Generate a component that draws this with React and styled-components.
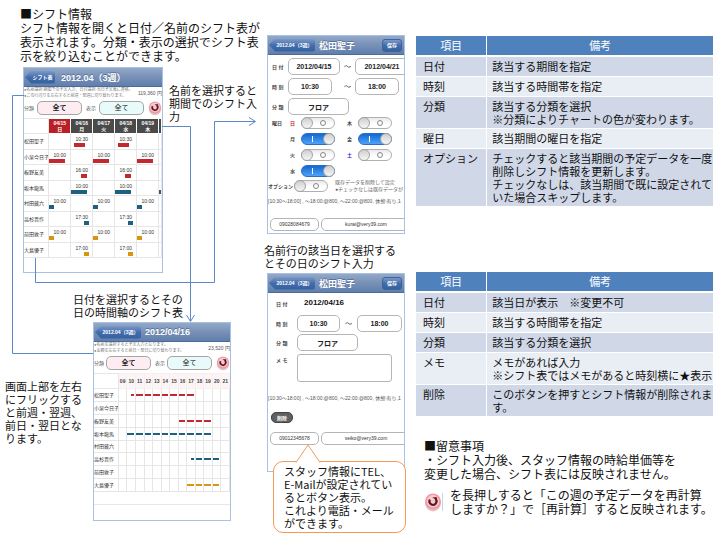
import React from "react";
import styled, { createGlobalStyle, css } from "styled-components";

const GlobalStyle = createGlobalStyle`
  *, *::before, *::after { box-sizing: border-box; }
  body {
    margin: 0;
    background: #fff;
    color: #111;
    font-family: "Liberation Sans", "Noto Sans CJK JP", sans-serif;
  }
  p, h2 { margin: 0; font-weight: 400; }
  button, input, textarea { font-family: inherit; margin: 0; padding: 0; }
`;

/* ---------- page ---------- */

const Page = styled.main`
  position: relative;
  display: grid;
  grid-template-columns: 264fr 152fr 297fr;
  align-items: start;
  padding-right: 11px;
  min-height: 535px;
  overflow: hidden;
`;

const Column = styled.section`
  display: flex;
  flex-direction: column;
  min-width: 0;
  padding-top: ${(p) => p.$top}px;
`;

const Lead = styled.div`
  font-size: 12px;
  line-height: 14px;
  white-space: nowrap;
  font-family: "Noto Sans CJK JP", sans-serif;
  h2 { font-size: inherit; }
`;

const Intro = styled(Lead)`
  padding-left: 20px;
`;

const Caption = styled.p`
  font-family: "Noto Sans CJK JP", sans-serif;
  font-size: 11px;
  line-height: 13px;
  white-space: nowrap;
`;

const WeekSection = styled.div`
  display: flex;
  gap: 6px;
  margin-top: 4px;
  padding-left: 23px;
  ${Caption} { padding-top: 17px; }
`;

const DayCaption = styled(Caption)`
  margin: 20px 0 3px 73px;
`;

const DaySection = styled.div`
  display: flex;
  padding-left: 5px;
  ${Caption} { flex: 0 0 88px; padding-top: 58px; }
`;

const FormCaption = styled(Caption)`
  margin: 10px 0 3px;
`;

/* ---------- phone frame ---------- */

const Phone = styled.article`
  flex: 0 0 auto;
  width: ${(p) => p.$width};
  margin-left: ${(p) => p.$left || 0}px;
  min-height: ${(p) => p.$height}px;
  border: 1px solid #a9c1e4;
  background: #fff;
  overflow: hidden;
  color: #333;
`;

const TitleBar = styled.header`
  display: flex;
  align-items: center;
  gap: 4px;
  height: 19px;
  padding: 0 2px 0 1px;
  background: linear-gradient(#93a9c8, #7790b6 50%, #607fae);
  border-bottom: 1px solid #4d6a98;
  color: #fff;
  white-space: nowrap;
`;

const BarTitle = styled.h2`
  flex: 1;
  && { font-size: 9px; font-weight: 700; }
  padding-left: ${(p) => (p.$indent ? 2 : 0)}px;
  text-shadow: 0 -1px 0 #5a7299;
`;

const barButton = css`
  height: 13px;
  border: 0;
  color: #fff;
  font-size: 5px;
  font-weight: 700;
  line-height: 13px;
  background: linear-gradient(#7c99c8, #426cab 50%, #34619f);
`;

const BackButton = styled.button`
  ${barButton}
  width: ${(p) => p.$width}px;
  padding-left: 5px;
  border-radius: 3px;
  clip-path: polygon(0 50%, 6px 0, 100% 0, 100% 100%, 6px 100%);
`;

const SaveButton = styled.button`
  ${barButton}
  width: 20px;
  border: 1px solid #3f6299;
  border-radius: 3px;
  line-height: 11px;
`;

const Hint = styled.div`
  display: flex;
  align-items: center;
  justify-content: space-between;
  height: 12px;
  font-size: 4px;
  line-height: 6px;
  color: #777;
  white-space: nowrap;
`;

const Amount = styled.span`
  font-size: 5px;
  color: #555;
`;

const FilterBar = styled.div`
  display: flex;
  align-items: center;
  height: 17px;
  margin-bottom: 2px;
  gap: 2px;
`;

const FilterLabel = styled.span`
  width: 11px;
  margin-left: ${(p) => (p.$second ? 2 : 0)}px;
  font-size: 5px;
  color: #666;
  white-space: nowrap;
`;

const FilterButton = styled.button`
  flex: 0 0 45px;
  height: 14px;
  border: 1px solid #a5a5a5;
  border-radius: 5px;
  background: ${(p) => (p.$tone === "pink" ? "#fdecf2" : "#e8fbfa")};
  color: #222;
  font-size: 7px;
  font-weight: ${(p) => (p.$tone === "pink" ? 700 : 400)};
  line-height: 11px;
`;

const RoundButton = styled.button`
  display: block;
  width: ${(p) => p.$size}px;
  height: ${(p) => p.$size}px;
  margin-left: ${(p) => p.$gap || 0}px;
  flex: none;
  border: 0;
  background: none;
  svg { display: block; width: 100%; height: 100%; overflow: visible; }
`;

function ReloadButton({ size, gap }) {
  return (
    <RoundButton $size={size} $gap={gap} aria-label="再計算">
      <svg viewBox="0 0 16 18">
        <ellipse cx="8" cy="10.6" rx="7.8" ry="7.8" fill="#e3c3c7" />
        <circle cx="8" cy="8.5" r="8" fill="#ef9aa5" />
        <circle cx="8" cy="8.3" r="6.2" fill="#f9c9cf" />
        <path d="M4.9 6.6A3.5 3.5 0 1 0 10.6 6" fill="none" stroke="#5c1a22" strokeWidth="2.2" />
        <path d="M7.4 4.2h4.6v3.6z" fill="#5c1a22" />
      </svg>
    </RoundButton>
  );
}

/* ---------- schedule tables ---------- */

const paint = { red: "#c3282f", blue: "#1f6080", gold: "#d6960f" };

const Schedule = styled.table`
  width: 100%;
  height: ${(p) => p.$height}px;
  table-layout: fixed;
  border-collapse: collapse;
  font-size: 5px;
  line-height: 6px;
  th, td { padding: 0; border: 1px solid #e6e6e6; overflow: hidden; }
  tbody th { font-weight: 400; text-align: left; white-space: nowrap; border-left: 0; }
`;

const NameCol = styled.col`
  width: 18%;
`;
const DayCol = styled.col`
  width: 16%;
`;

const DateHead = styled.th`
  height: 15px;
  && { border-color: #fff; }
  background: ${(p) => (p.$sunday ? "#b81f26" : "#4a4a4a")};
  color: #fff;
`;

const Corner = styled.th`
  && { border-left: 0; }
`;

const ShiftCell = styled.td`
  vertical-align: top;
`;

const ShiftTime = styled.span`
  display: block;
  height: 9px;
  padding-top: 1px;
  text-align: center;
  line-height: 8px;
`;

const ShiftBar = styled.span`
  display: block;
  height: 4px;
  background: ${(p) => paint[p.$color]};
`;

const HourHead = styled.th`
  height: 15px;
  && { border-color: #f7eeee; overflow: visible; }
  background: #fdf5f5;
  color: #444;
`;

const HourBar = styled.span`
  display: block;
  height: 2px;
  margin-right: 1px;
  margin-left: ${(p) => (p.$half ? "50%" : "0")};
  background: ${(p) => paint[p.$color]};
`;

const BlankRow = styled.div`
  height: 13px;
  border-bottom: 1px solid #e6e6e6;
`;

const dates = ["04/15 日", "04/16 月", "04/17 火", "04/18 水", "04/19 木"];

const staff = [
  { name: "松田聖子", days: [1, 3], time: "10:30", from: 14, len: 50, color: "red", hours: [10.5, 18] },
  { name: "小泉今日子", days: [0, 2, 4], time: "10:00", from: 0, len: 75, color: "red" },
  { name: "板野友美", days: [1, 3], time: "16:00", from: 47, len: 26, color: "red", hours: [16, 20] },
  { name: "坂本龍馬", days: [1, 3, 5], time: "10:00", from: 0, len: 75, color: "blue", hours: [10, 20] },
  { name: "村田蔵六", days: [0, 2, 4], time: "10:00", from: 0, len: 23, color: "blue" },
  { name: "高杉晋作", days: [1, 3], time: "17:30", from: 60, len: 26, color: "blue", hours: [17.5, 21] },
  { name: "前田敦子", days: [0, 2, 4], time: "10:00", from: 0, len: 23, color: "gold" },
  { name: "大島優子", days: [1, 3], time: "17:00", from: 60, len: 26, color: "gold", hours: [17, 21] },
];

const hourList = Array.from({ length: 13 }, (_, i) => i + 9);

function WeekTable() {
  return (
    <Schedule $height={140}>
      <colgroup>
        <NameCol />
        {dates.map((d) => <DayCol key={d} />)}
        <col />
      </colgroup>
      <thead>
        <tr>
          <Corner />
          {dates.map((d, i) => {
            const [date, day] = d.split(" ");
            return <DateHead key={d} $sunday={i === 0}>{date}<br />{day}</DateHead>;
          })}
          <DateHead />
        </tr>
      </thead>
      <tbody>
        {staff.map((s) => (
          <tr key={s.name}>
            <th scope="row">{s.name}</th>
            {[0, 1, 2, 3, 4, 5].map((d) => (
              <ShiftCell key={d}>
                {s.days.includes(d) && (
                  <>
                    <ShiftTime>{d < 5 ? s.time : ""}</ShiftTime>
                    <ShiftBar $color={s.color} style={{ marginLeft: `${s.from}%`, width: `${s.len}%` }} />
                  </>
                )}
              </ShiftCell>
            ))}
          </tr>
        ))}
      </tbody>
    </Schedule>
  );
}

function DayTable() {
  return (
    <Schedule $height={119}>
      <colgroup>
        <NameCol />
      </colgroup>
      <thead>
        <tr>
          <Corner />
          {hourList.map((h) => <HourHead key={h}>{String(h).padStart(2, "0")}</HourHead>)}
        </tr>
      </thead>
      <tbody>
        {staff.map((s) => (
          <tr key={s.name}>
            <th scope="row">{s.name}</th>
            {hourList.map((h) => (
              <td key={h}>
                {s.hours && h + 1 > s.hours[0] && h < s.hours[1] && (
                  <HourBar $color={s.color} $half={s.hours[0] > h} />
                )}
              </td>
            ))}
          </tr>
        ))}
      </tbody>
    </Schedule>
  );
}

function Filters() {
  return (
    <FilterBar>
      <FilterLabel>分類</FilterLabel>
      <FilterButton $tone="pink" aria-label="分類">全て</FilterButton>
      <FilterLabel $second>表示</FilterLabel>
      <FilterButton $tone="mint" aria-label="表示">全て</FilterButton>
      <ReloadButton size={14} gap={2} />
    </FilterBar>
  );
}

/* ---------- form screens ---------- */

const FormGrid = styled.div`
  display: grid;
  grid-template-columns: ${(p) => (p.$daily ? "21px 43px 17px 45px" : "16px 52px 15px 52px")};
  row-gap: ${(p) => (p.$daily ? 2 : 3)}px;
  align-items: center;
  padding: ${(p) => (p.$daily ? "1px 0 0 8px" : "3px 0 0 4px")};
`;

const FieldLabel = styled.label`
  font-size: 5px;
  line-height: 8px;
  font-weight: 700;
  color: #444;
  white-space: nowrap;
  align-self: ${(p) => (p.$start ? "start" : "center")};
  padding-top: ${(p) => (p.$start ? 3 : 0)}px;
`;

const Field = styled.input`
  display: block;
  width: ${(p) => p.$width}px;
  height: 17px;
  border: 1px solid #b5b5b5;
  border-radius: 5px;
  background: #fff;
  color: #222;
  font-size: 7px;
  font-weight: 700;
  text-align: center;
`;

const WideSlot = styled.div`
  grid-column: 2 / -1;
  display: flex;
`;

const DateValue = styled.output`
  grid-column: 2 / -1;
  height: 19px;
  padding-left: 7px;
  color: #111;
  font-size: 8px;
  font-weight: 700;
  line-height: 18px;
`;

const Memo = styled.textarea`
  width: 95px;
  height: 28px;
  margin-top: 1px;
  resize: none;
  border: 1px solid #b5b5b5;
  border-radius: 3px;
`;

const Tilde = styled.span`
  text-align: center;
  font-size: 7px;
  line-height: 10px;
`;

const DaysGrid = styled.div`
  display: grid;
  grid-template-columns: 16px 13px 34px 23px 34px;
  grid-auto-flow: row;
  row-gap: 4px;
  align-items: center;
  padding: 2px 0 0 4px;
`;

const DayLabel = styled.label`
  grid-column: ${(p) => (p.$second ? 4 : 2)};
  padding-left: ${(p) => (p.$second ? 12 : 2)}px;
  font-size: 5px;
  line-height: 8px;
  font-weight: 700;
  color: ${(p) => p.$color || "#444"};
`;

const Switch = styled.input`
  appearance: none;
  position: relative;
  display: block;
  flex: none;
  width: 34px;
  height: 12px;
  border: 1px solid #b0b0b0;
  border-radius: 6px;
  background: linear-gradient(#e9e9e9, #fff 60%);
  &::before {
    content: "";
    position: absolute;
    top: -1px;
    left: -1px;
    width: 12px;
    height: 12px;
    border: 1px solid #a3a3a3;
    border-radius: 50%;
    background: linear-gradient(#cfcfcf, #f6f6f6);
  }
  &::after {
    content: "";
    position: absolute;
    top: 2px;
    right: 8px;
    width: 6px;
    height: 6px;
    border: 1px solid #888;
    border-radius: 50%;
  }
  &:checked {
    border-color: #2a6fc4;
    background: linear-gradient(#1268d2, #4ea3f7);
  }
  &:checked::before { left: auto; right: -1px; }
  &:checked::after {
    right: auto;
    left: 10px;
    width: 1px;
    border: 0;
    border-radius: 0;
    background: #fff;
  }
`;

const OptionRow = styled.div`
  display: flex;
  align-items: center;
  gap: 1px;
  margin-top: 2px;
  white-space: nowrap;
`;

const OptionNote = styled.p`
  padding-left: 6px;
  font-size: 5px;
  line-height: 7px;
  color: #666;
`;

const Rates = styled.p`
  height: 9px;
  margin-top: ${(p) => p.$top}px;
  font-size: 5px;
  line-height: 9px;
  color: #555;
  white-space: nowrap;
`;

const DeleteButton = styled.button`
  display: block;
  width: 22px;
  height: 11px;
  margin: 9px 0 0 3px;
  border: 1px solid #444;
  border-radius: 5px;
  background: #606060;
  color: #fff;
  font-size: 5px;
  font-weight: 700;
  line-height: 8px;
`;

const ContactRow = styled.div`
  display: flex;
  gap: 2px;
  margin-top: ${(p) => p.$top}px;
  padding-left: 2px;
`;

const ContactButton = styled.button`
  flex: 0 0 ${(p) => p.$width}px;
  height: 13px;
  border: 1px solid #b5b5b5;
  border-radius: 5px;
  background: #fff;
  color: #333;
  font-size: 5px;
  line-height: 11px;
`;

function FormBar() {
  return (
    <TitleBar>
      <BackButton $width={46}>2012.04（3週）</BackButton>
      <BarTitle>松田聖子</BarTitle>
      <SaveButton>保存</SaveButton>
    </TitleBar>
  );
}

function RateText({ top }) {
  return <Rates $top={top}>[10:30～18:00] , ～18:00:@800, ～22:00:@800, 休憩:有り,1</Rates>;
}

const weekdays = [
  [{ day: "日", color: "#c3282f" }, { day: "木" }],
  [{ day: "月", on: true }, { day: "金", on: true }],
  [{ day: "火" }, { day: "土", color: "#2323e0" }],
  [{ day: "水", on: true }],
];

function PeriodForm() {
  return (
    <Phone $width="138px" $left={3} $height={199}>
      <FormBar />
      <FormGrid>
        <FieldLabel htmlFor="p-from">日 付</FieldLabel>
        <Field id="p-from" $width={52} defaultValue="2012/04/15" />
        <Tilde>～</Tilde>
        <Field aria-label="終了日" $width={54} defaultValue="2012/04/21" />
        <FieldLabel htmlFor="p-start">時 刻</FieldLabel>
        <Field id="p-start" $width={44} defaultValue="10:30" />
        <Tilde>～</Tilde>
        <Field aria-label="終了時刻" $width={44} defaultValue="18:00" />
        <FieldLabel htmlFor="p-type">分 類</FieldLabel>
        <WideSlot><Field id="p-type" $width={61} defaultValue="フロア" /></WideSlot>
      </FormGrid>
      <DaysGrid>
        <FieldLabel as="span">曜日</FieldLabel>
        {weekdays.flatMap((pair) =>
          pair.map((d, i) => (
            <React.Fragment key={d.day}>
              <DayLabel htmlFor={`d-${d.day}`} $second={i === 1} $color={d.color}>{d.day}</DayLabel>
              <Switch id={`d-${d.day}`} type="checkbox" defaultChecked={d.on} />
            </React.Fragment>
          ))
        )}
      </DaysGrid>
      <OptionRow>
        <FieldLabel htmlFor="p-option">オプション</FieldLabel>
        <Switch id="p-option" type="checkbox" />
        <OptionNote>既存データを削除して設定<br />●チェックなしは既存データが</OptionNote>
      </OptionRow>
      <RateText top={4} />
      <ContactRow $top={12}>
        <ContactButton $width={49}>09028084679</ContactButton>
        <ContactButton $width={90}>kurai@very39.com</ContactButton>
      </ContactRow>
    </Phone>
  );
}

function DailyForm() {
  return (
    <Phone $width="138px" $left={3} $height={199}>
      <FormBar />
      <FormGrid $daily>
        <FieldLabel as="span">日 付</FieldLabel>
        <DateValue>2012/04/16</DateValue>
        <FieldLabel htmlFor="s-start">時 刻</FieldLabel>
        <Field id="s-start" $width={43} defaultValue="10:30" />
        <Tilde>～</Tilde>
        <Field aria-label="終了時刻" $width={45} defaultValue="18:00" />
        <FieldLabel htmlFor="s-type">分 類</FieldLabel>
        <WideSlot><Field id="s-type" $width={61} defaultValue="フロア" /></WideSlot>
        <FieldLabel htmlFor="s-memo" $start>メ モ</FieldLabel>
        <WideSlot><Memo id="s-memo" /></WideSlot>
      </FormGrid>
      <RateText top={12} />
      <DeleteButton>削除</DeleteButton>
      <ContactRow $top={9}>
        <ContactButton $width={49}>09012345678</ContactButton>
        <ContactButton $width={90}>seiko@very39.com</ContactButton>
      </ContactRow>
    </Phone>
  );
}

/* ---------- callout ---------- */

const Callout = styled.aside`
  position: relative;
  width: 133px;
  margin: -11px 0 0 9px;
  padding: 3px 0 2px 10px;
  border: 1px solid #f39a57;
  border-radius: 10px;
  background: #fff;
`;

const Tail = styled.svg`
  position: absolute;
  left: 21px;
  top: -18px;
  width: 26px;
  height: 19px;
`;

/* ---------- description tables ---------- */

const InfoTable = styled.table`
  width: 100%;
  margin-top: ${(p) => p.$top || 0}px;
  table-layout: fixed;
  border-collapse: separate;
  border-spacing: 0;
  font-family: "Noto Sans CJK JP", sans-serif;
  font-size: 11px;
  line-height: 13px;
  white-space: nowrap;
  th { font-weight: 400; }
  thead th {
    height: 21px;
    padding: 0;
    border-bottom: 2px solid #fff;
    background: #4f81bd;
    background-clip: padding-box;
    color: #fff;
  }
  tbody th, td {
    height: 20px;
    padding: 3px 0 2px 7px;
    border-bottom: 1px solid #fff;
    text-align: left;
    vertical-align: top;
  }
  td { padding-left: 5px; }
  th:first-child { border-right: 1px solid #fff; }
  tbody tr:nth-child(odd) { background: #d0d8e8; }
  tbody tr:nth-child(even) { background: #e9edf4; }
`;

const KeyCol = styled.col`
  width: 24%;
`;

function Info({ rows, top }) {
  return (
    <InfoTable $top={top}>
      <colgroup><KeyCol /><col /></colgroup>
      <thead><tr><th>項目</th><th>備考</th></tr></thead>
      <tbody>
        {rows.map(([key, ...lines]) => (
          <tr key={key}>
            <th scope="row">{key}</th>
            <td>{lines.map((l, i) => <React.Fragment key={l}>{i > 0 && <br />}{l}</React.Fragment>)}</td>
          </tr>
        ))}
      </tbody>
    </InfoTable>
  );
}

const periodRows = [
  ["日付", "該当する期間を指定"],
  ["時刻", "該当する時間帯を指定"],
  ["分類", "該当する分類を選択", "※分類によりチャートの色が変わります。"],
  ["曜日", "該当期間の曜日を指定"],
  ["オプション", "チェックすると該当期間の予定データを一度", "削除しシフト情報を更新します。", "チェックなしは、該当期間で既に設定されて", "いた場合スキップします。"],
];

const dailyRows = [
  ["日付", "該当日が表示　※変更不可"],
  ["時刻", "該当する時間帯を指定"],
  ["分類", "該当する分類を選択"],
  ["メモ", "メモがあれば入力", "※シフト表ではメモがあると時刻横に★表示"],
  ["削除", "このボタンを押すとシフト情報が削除されま", "す。"],
];

const Remarks = styled(Lead)`
  margin-top: 22px;
  padding-left: 8px;
`;

const RecalcNote = styled.div`
  display: flex;
  align-items: center;
  gap: 8px;
  margin-top: 7px;
  ${RoundButton} { box-shadow: 1px 0 0 #c9d6ea; }
`;

/* ---------- connectors ---------- */

const Connectors = styled.svg`
  position: absolute;
  inset: 0;
  width: 100%;
  height: 535px;
  pointer-events: none;
  fill: none;
  stroke: #5b8ac6;
  path { vector-effect: non-scaling-stroke; }
`;

export default function App() {
  return (
    <>
      <GlobalStyle />
      <Page>
        <Column $top={7}>
          <Intro>
            <h2>■シフト情報</h2>
            <p>シフト情報を開くと日付／名前のシフト表が<br />表示されます。分類・表示の選択でシフト表<br />示を絞り込むことができます。</p>
          </Intro>
          <WeekSection>
            <Phone $width="140px" $height={206}>
              <TitleBar>
                <BackButton $width={30}>シフト表</BackButton>
                <BarTitle $indent>2012.04（3週）</BarTitle>
              </TitleBar>
              <Hint>
                <span>●名前選択:期間での予定入力、日付選択:当日予定表に遷移。<br />●この行辺りを左右すると前週・翌週に切り替わります。</span>
                <Amount>119,360 円</Amount>
              </Hint>
              <Filters />
              <WeekTable />
            </Phone>
            <Caption>名前を選択すると<br />期間でのシフト入<br />力</Caption>
          </WeekSection>
          <DayCaption>日付を選択するとその<br />日の時間軸のシフト表</DayCaption>
          <DaySection>
            <Caption>画面上部を左右<br />にフリックする<br />と前週・翌週、<br />前日・翌日とな<br />ります。</Caption>
            <Phone $width="138px" $height={199}>
              <TitleBar>
                <BackButton $width={46}>2012.04（3週）</BackButton>
                <BarTitle>2012/04/16</BarTitle>
              </TitleBar>
              <Hint>
                <span>●名前を選択すると予定入力となります。<br />●金額を左右すると前日・翌日に切り替わります。</span>
                <Amount>23,520 円</Amount>
              </Hint>
              <Filters />
              <DayTable />
              <BlankRow />
            </Phone>
          </DaySection>
        </Column>

        <Column $top={35}>
          <PeriodForm />
          <FormCaption>名前行の該当日を選択する<br />とその日のシフト入力</FormCaption>
          <DailyForm />
          <Callout>
            <Tail viewBox="0 0 26 19">
              <path d="M1 18.5L13 1L25 18.5" fill="#fff" stroke="#f39a57" />
            </Tail>
            <Caption>スタッフ情報にTEL、<br />E-Mailが設定されてい<br />るとボタン表示。<br />これより電話・メール<br />ができます。</Caption>
          </Callout>
        </Column>

        <Column $top={36}>
          <Info rows={periodRows} />
          <Info rows={dailyRows} top={65} />
          <Remarks>
            <h2>■留意事項</h2>
            <p>・シフト入力後、スタッフ情報の時給単価等を<br />変更した場合、シフト表には反映されません。</p>
            <RecalcNote>
              <ReloadButton size={18} />
              <p>を長押しすると「この週の予定データを再計算<br />しますか？」で［再計算］すると反映されます。</p>
            </RecalcNote>
          </Remarks>
        </Column>

        <Connectors viewBox="0 0 724 535" preserveAspectRatio="none" aria-hidden="true">
          <path d="M24 95.5H12.5V353.5H93" />
          <path d="M162 126.5H190.5V321M186.5 315L190.5 321.5L194.5 315" />
          <path d="M35.5 258V282.5H214.5V121.5H255M249 117.5L255.5 121.5L249 125.5" />
        </Connectors>
      </Page>
    </>
  );
}
